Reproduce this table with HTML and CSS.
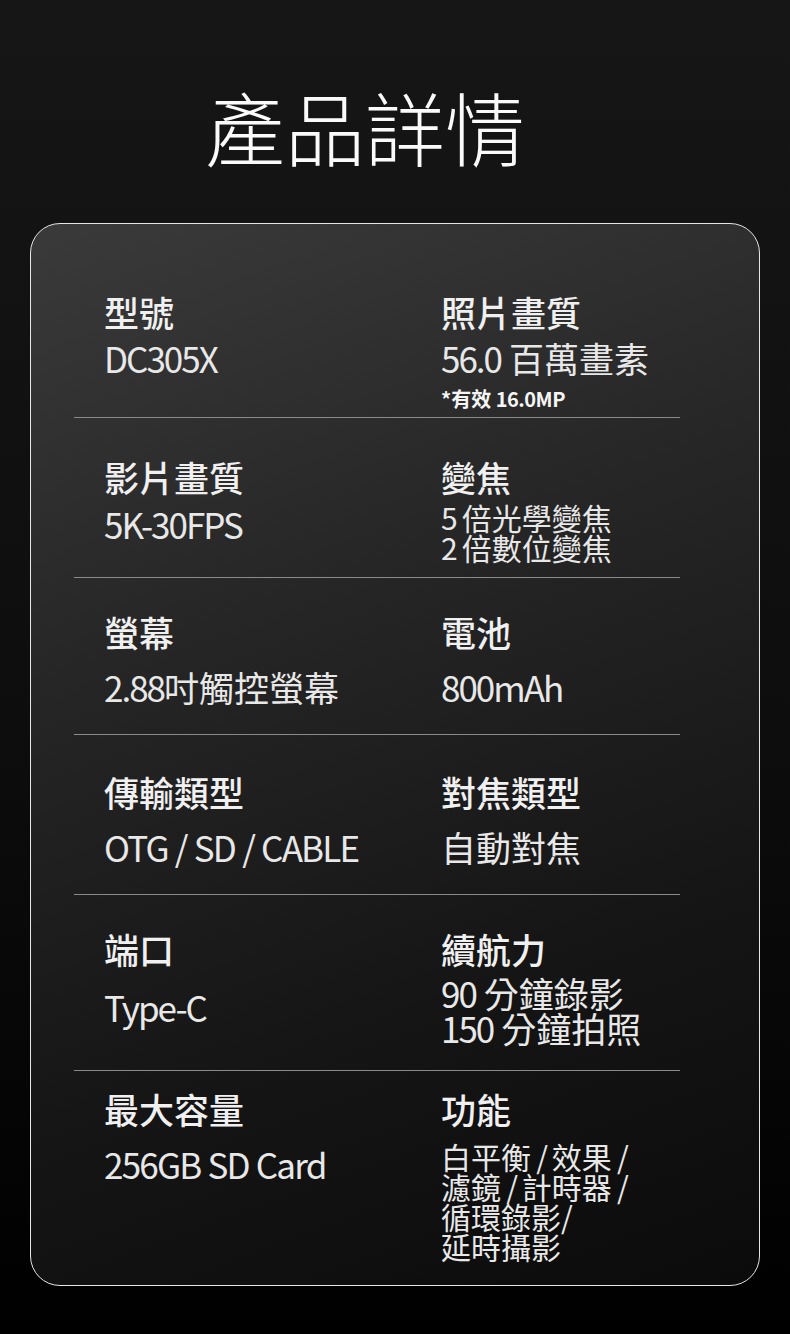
FILE: index.html
```html
<!DOCTYPE html>
<html lang="zh-Hant">
<head>
<meta charset="utf-8">
<link rel="stylesheet" href="styles.css">
</head>
<body>
<div class="page">
  <h1 class="title">產品詳情</h1>
  <div class="card">
    <div class="row r1">
      <div class="cell">
        <div class="label">型號</div>
        <div class="value v-gap6"><span class="lat">DC305X</span></div>
      </div>
      <div class="cell">
        <div class="label">照片畫質</div>
        <div class="value v-gap6"><span class="lat pre">56.0</span>百萬畫素</div>
        <div class="note">*有效 <span class="note-num">16.0MP</span></div>
      </div>
    </div>
    <div class="row r2">
      <div class="cell">
        <div class="label">影片畫質</div>
        <div class="value v-gap7"><span class="lat">5K-30FPS</span></div>
      </div>
      <div class="cell">
        <div class="label">變焦</div>
        <div class="small v-gap5"><span class="pre-s">5</span>倍光學變焦<br><span class="pre-s">2</span>倍數位變焦</div>
      </div>
    </div>
    <div class="row r3">
      <div class="cell">
        <div class="label">螢幕</div>
        <div class="value v-gap15"><span class="lat">2.88</span>吋觸控螢幕</div>
      </div>
      <div class="cell">
        <div class="label">電池</div>
        <div class="value v-gap15"><span class="lat">800mAh</span></div>
      </div>
    </div>
    <div class="row r4">
      <div class="cell">
        <div class="label">傳輸類型</div>
        <div class="value v-gap15"><span class="lat wide">OTG / SD / CABLE</span></div>
      </div>
      <div class="cell">
        <div class="label">對焦類型</div>
        <div class="value v-gap15">自動對焦</div>
      </div>
    </div>
    <div class="row r5">
      <div class="cell">
        <div class="label">端口</div>
        <div class="value v-gap18"><span class="lat">Type-C</span></div>
      </div>
      <div class="cell">
        <div class="label">續航力</div>
        <div class="mid v-gap6"><span class="lat pre">90</span>分鐘錄影<br><span class="lat pre">150</span>分鐘拍照</div>
      </div>
    </div>
    <div class="row r6">
      <div class="cell">
        <div class="label">最大容量</div>
        <div class="value v-gap15"><span class="lat wide">256GB SD Card</span></div>
      </div>
      <div class="cell">
        <div class="label">功能</div>
        <div class="small v-gap12">白平衡<span class="lat-s"> / </span>效果<span class="lat-s"> /</span><br>濾鏡<span class="lat-s"> / </span>計時器<span class="lat-s"> /</span><br>循環錄影<span class="lat-s">/</span><br>延時攝影</div>
      </div>
    </div>
  </div>
</div>
</body>
</html>
```

FILE: styles.css
```css
html, body {
  margin: 0;
  padding: 0;
}

body {
  width: 790px;
  height: 1334px;
  overflow: hidden;
  background: linear-gradient(180deg, #161616 0%, #0d0d0d 55%, #000 100%);
  font-family: "Noto Sans CJK TC", "Noto Sans", sans-serif;
  color: #ececec;
}

.page {
  padding-top: 75px;
}

.title {
  margin: 0 0 48px 0;
  padding-left: 205px;
  font-size: 80px;
  line-height: 100px;
  font-weight: 300;
  color: #fafafa;
  letter-spacing: 0;
}

.card {
  margin-left: 30px;
  width: 730px;
  height: 1063px;
  box-sizing: border-box;
  border: 1.5px solid #e6e6e6;
  border-radius: 30px;
  padding: 0 0 0 43px;
  background: linear-gradient(160deg, #3a3a3a 0%, #262626 35%, #151515 70%, #0b0b0b 100%);
}

.row {
  width: 606px;
  display: grid;
  grid-template-columns: 337px 1fr;
  padding-left: 30px;
  box-sizing: border-box;
  border-bottom: 1px solid #8a8a8a;
}

.row.r6 {
  border-bottom: none;
}

.r1 { padding-top: 68px; padding-bottom: 6px; }
.r2 { padding-top: 39px; padding-bottom: 15px; }
.r3 { padding-top: 34px; padding-bottom: 27px; }
.r4 { padding-top: 37px; padding-bottom: 27px; }
.r5 { padding-top: 34px; padding-bottom: 25px; }
.r6 { padding-top: 18px; padding-bottom: 0; }

.cell {
  display: flex;
  flex-direction: column;
}

.label {
  font-size: 35px;
  line-height: 40px;
  font-weight: 500;
  color: #f0f0f0;
}

.value {
  font-size: 35px;
  line-height: 40px;
  font-weight: 400;
  color: #e8e8e8;
}

.mid {
  font-size: 35px;
  line-height: 35px;
  color: #e8e8e8;
}

.small {
  font-size: 30px;
  line-height: 30px;
  color: #e8e8e8;
}

.lat {
  letter-spacing: -2px;
}

.lat.wide {
  letter-spacing: -1.8px;
  word-spacing: 1px;
}

.pre {
  margin-right: 8px;
}

.pre-s {
  margin-right: 4px;
}

.lat-s {
  letter-spacing: -1.5px;
}

.note {
  margin-top: 9px;
  font-size: 20px;
  line-height: 24px;
  font-weight: 700;
  color: #f5f5f5;
}

.note-num {
  font-size: 20px;
  letter-spacing: -0.5px;
}

.v-gap5 { margin-top: 5px; }
.v-gap6 { margin-top: 6px; }
.v-gap7 { margin-top: 7px; }
.v-gap12 { margin-top: 12px; }
.v-gap15 { margin-top: 15px; }
.v-gap18 { margin-top: 18px; }
```
